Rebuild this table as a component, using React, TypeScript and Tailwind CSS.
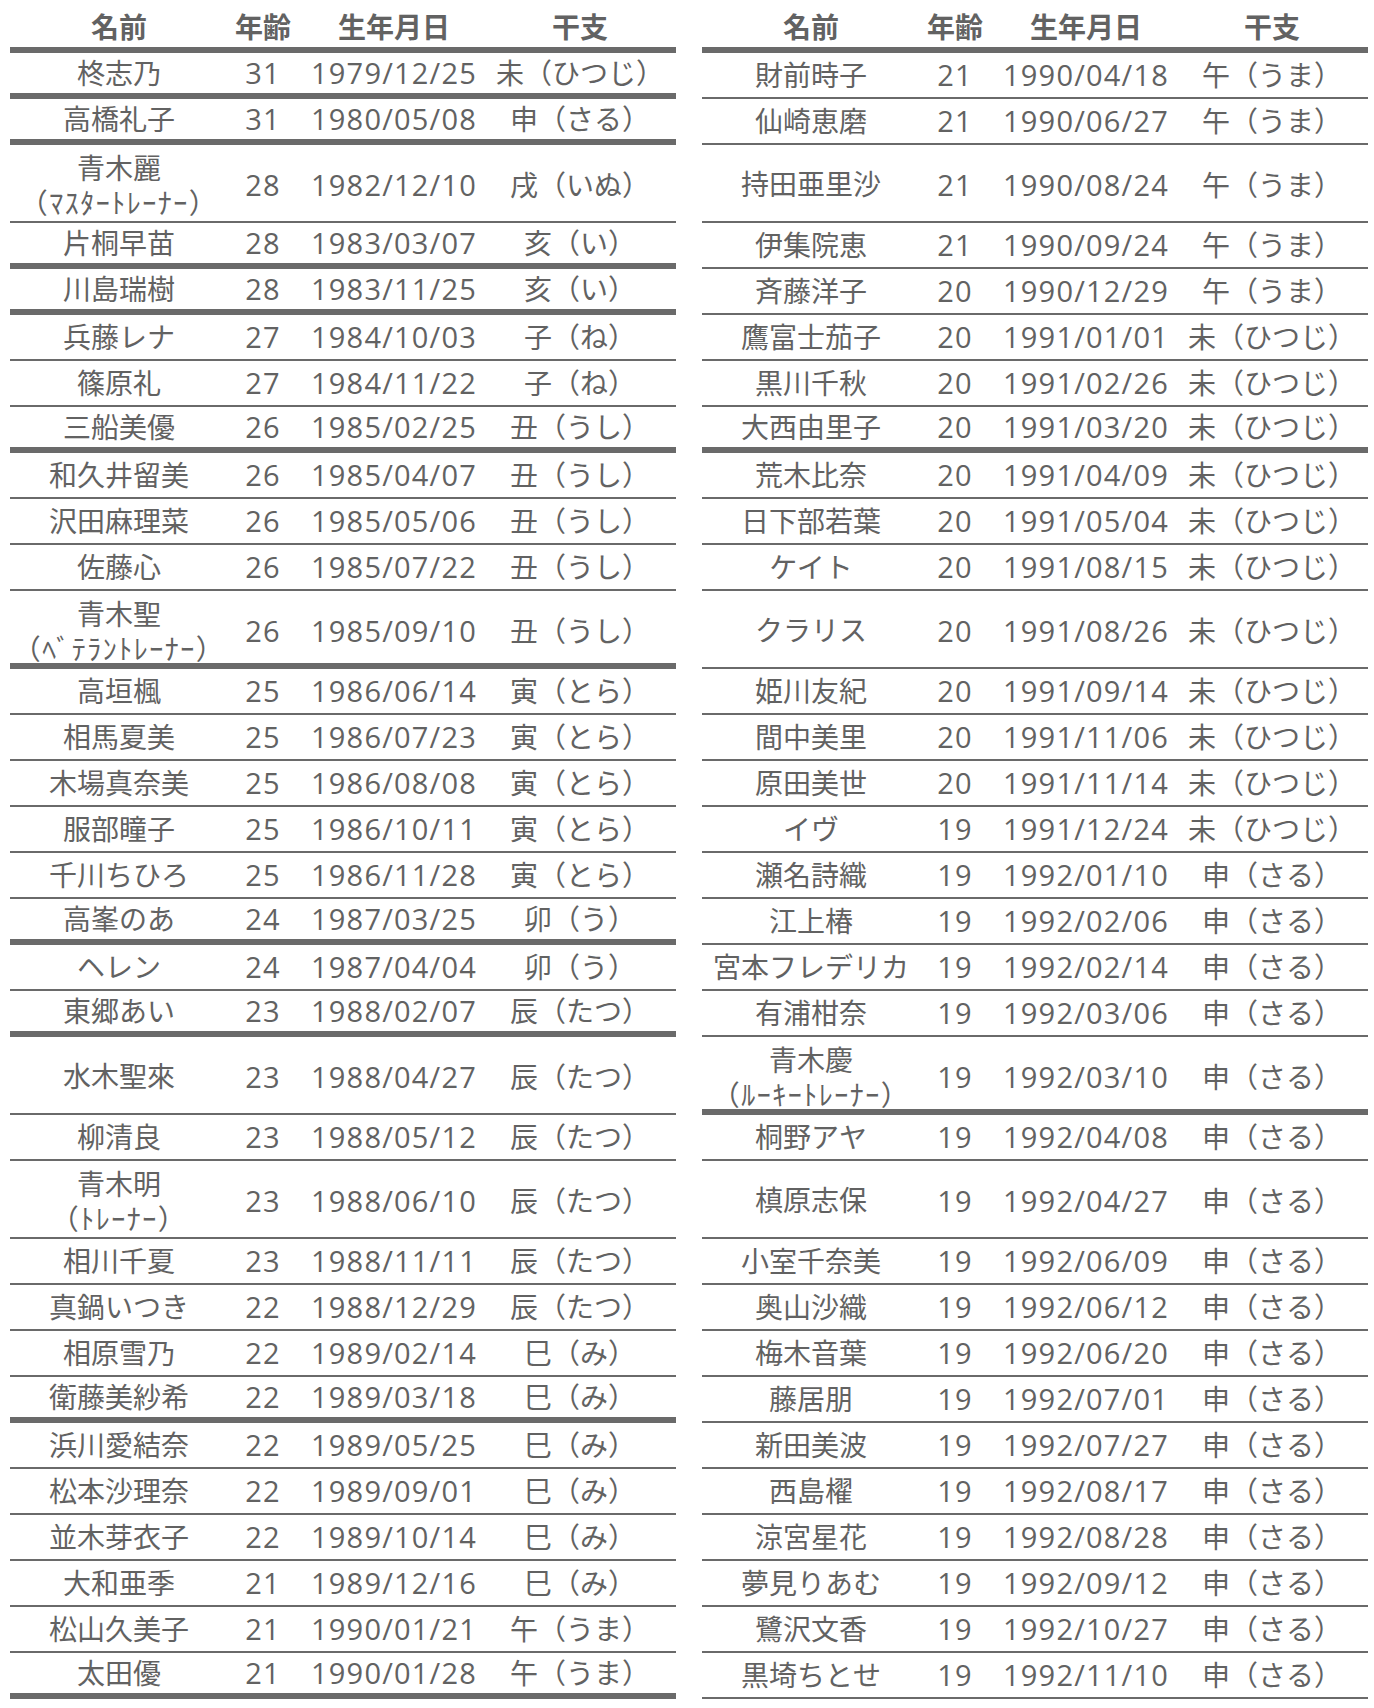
import React from "react";

type Row = {
  n: string;
  sub?: string;
  a: string;
  d: string;
  z: string;
  tall?: boolean;
  thick?: boolean;
};

const left: Row[] = [
  { n: "柊志乃", a: "31", d: "1979/12/25", z: "未（ひつじ）", thick: true },
  { n: "高橋礼子", a: "31", d: "1980/05/08", z: "申（さる）", thick: true },
  { n: "青木麗", sub: "（ﾏｽﾀｰﾄﾚｰﾅｰ）", a: "28", d: "1982/12/10", z: "戌（いぬ）", tall: true },
  { n: "片桐早苗", a: "28", d: "1983/03/07", z: "亥（い）", thick: true },
  { n: "川島瑞樹", a: "28", d: "1983/11/25", z: "亥（い）", thick: true },
  { n: "兵藤レナ", a: "27", d: "1984/10/03", z: "子（ね）" },
  { n: "篠原礼", a: "27", d: "1984/11/22", z: "子（ね）" },
  { n: "三船美優", a: "26", d: "1985/02/25", z: "丑（うし）", thick: true },
  { n: "和久井留美", a: "26", d: "1985/04/07", z: "丑（うし）" },
  { n: "沢田麻理菜", a: "26", d: "1985/05/06", z: "丑（うし）" },
  { n: "佐藤心", a: "26", d: "1985/07/22", z: "丑（うし）" },
  { n: "青木聖", sub: "（ﾍﾞﾃﾗﾝﾄﾚｰﾅｰ）", a: "26", d: "1985/09/10", z: "丑（うし）", tall: true, thick: true },
  { n: "高垣楓", a: "25", d: "1986/06/14", z: "寅（とら）" },
  { n: "相馬夏美", a: "25", d: "1986/07/23", z: "寅（とら）" },
  { n: "木場真奈美", a: "25", d: "1986/08/08", z: "寅（とら）" },
  { n: "服部瞳子", a: "25", d: "1986/10/11", z: "寅（とら）" },
  { n: "千川ちひろ", a: "25", d: "1986/11/28", z: "寅（とら）" },
  { n: "高峯のあ", a: "24", d: "1987/03/25", z: "卯（う）", thick: true },
  { n: "ヘレン", a: "24", d: "1987/04/04", z: "卯（う）" },
  { n: "東郷あい", a: "23", d: "1988/02/07", z: "辰（たつ）", thick: true },
  { n: "水木聖來", a: "23", d: "1988/04/27", z: "辰（たつ）", tall: true },
  { n: "柳清良", a: "23", d: "1988/05/12", z: "辰（たつ）" },
  { n: "青木明", sub: "（ﾄﾚｰﾅｰ）", a: "23", d: "1988/06/10", z: "辰（たつ）", tall: true },
  { n: "相川千夏", a: "23", d: "1988/11/11", z: "辰（たつ）" },
  { n: "真鍋いつき", a: "22", d: "1988/12/29", z: "辰（たつ）" },
  { n: "相原雪乃", a: "22", d: "1989/02/14", z: "巳（み）" },
  { n: "衛藤美紗希", a: "22", d: "1989/03/18", z: "巳（み）", thick: true },
  { n: "浜川愛結奈", a: "22", d: "1989/05/25", z: "巳（み）" },
  { n: "松本沙理奈", a: "22", d: "1989/09/01", z: "巳（み）" },
  { n: "並木芽衣子", a: "22", d: "1989/10/14", z: "巳（み）" },
  { n: "大和亜季", a: "21", d: "1989/12/16", z: "巳（み）" },
  { n: "松山久美子", a: "21", d: "1990/01/21", z: "午（うま）" },
  { n: "太田優", a: "21", d: "1990/01/28", z: "午（うま）", thick: true },
];

const right: Row[] = [
  { n: "財前時子", a: "21", d: "1990/04/18", z: "午（うま）" },
  { n: "仙崎恵磨", a: "21", d: "1990/06/27", z: "午（うま）" },
  { n: "持田亜里沙", a: "21", d: "1990/08/24", z: "午（うま）", tall: true },
  { n: "伊集院恵", a: "21", d: "1990/09/24", z: "午（うま）" },
  { n: "斉藤洋子", a: "20", d: "1990/12/29", z: "午（うま）" },
  { n: "鷹富士茄子", a: "20", d: "1991/01/01", z: "未（ひつじ）" },
  { n: "黒川千秋", a: "20", d: "1991/02/26", z: "未（ひつじ）" },
  { n: "大西由里子", a: "20", d: "1991/03/20", z: "未（ひつじ）", thick: true },
  { n: "荒木比奈", a: "20", d: "1991/04/09", z: "未（ひつじ）" },
  { n: "日下部若葉", a: "20", d: "1991/05/04", z: "未（ひつじ）" },
  { n: "ケイト", a: "20", d: "1991/08/15", z: "未（ひつじ）" },
  { n: "クラリス", a: "20", d: "1991/08/26", z: "未（ひつじ）", tall: true },
  { n: "姫川友紀", a: "20", d: "1991/09/14", z: "未（ひつじ）" },
  { n: "間中美里", a: "20", d: "1991/11/06", z: "未（ひつじ）" },
  { n: "原田美世", a: "20", d: "1991/11/14", z: "未（ひつじ）" },
  { n: "イヴ", a: "19", d: "1991/12/24", z: "未（ひつじ）" },
  { n: "瀬名詩織", a: "19", d: "1992/01/10", z: "申（さる）" },
  { n: "江上椿", a: "19", d: "1992/02/06", z: "申（さる）" },
  { n: "宮本フレデリカ", a: "19", d: "1992/02/14", z: "申（さる）" },
  { n: "有浦柑奈", a: "19", d: "1992/03/06", z: "申（さる）" },
  { n: "青木慶", sub: "（ﾙｰｷｰﾄﾚｰﾅｰ）", a: "19", d: "1992/03/10", z: "申（さる）", tall: true, thick: true },
  { n: "桐野アヤ", a: "19", d: "1992/04/08", z: "申（さる）" },
  { n: "槙原志保", a: "19", d: "1992/04/27", z: "申（さる）", tall: true },
  { n: "小室千奈美", a: "19", d: "1992/06/09", z: "申（さる）" },
  { n: "奥山沙織", a: "19", d: "1992/06/12", z: "申（さる）" },
  { n: "梅木音葉", a: "19", d: "1992/06/20", z: "申（さる）" },
  { n: "藤居朋", a: "19", d: "1992/07/01", z: "申（さる）" },
  { n: "新田美波", a: "19", d: "1992/07/27", z: "申（さる）" },
  { n: "西島櫂", a: "19", d: "1992/08/17", z: "申（さる）" },
  { n: "涼宮星花", a: "19", d: "1992/08/28", z: "申（さる）" },
  { n: "夢見りあむ", a: "19", d: "1992/09/12", z: "申（さる）" },
  { n: "鷺沢文香", a: "19", d: "1992/10/27", z: "申（さる）" },
  { n: "黒埼ちとせ", a: "19", d: "1992/11/10", z: "申（さる）" },
];

function TableRow({ r }: { r: Row }) {
  const h = r.tall ? "h-[78px] pt-[3px]" : "h-[46px]";
  const b = r.thick ? "border-b-[6px]" : "border-b-2";
  return (
    <div className={`grid grid-cols-[218px_70px_192px_180px] items-center ${h} ${b} border-[#6a6a6a]`}>
      <div className={`flex flex-col items-center leading-[35px] ${r.sub ? "pt-[3px]" : ""}`}>
        <span>{r.n}</span>
        {r.sub ? <span className="tracking-[1.5px]">{r.sub}</span> : null}
      </div>
      <div className="text-center text-[29px] tracking-[1.2px]">{r.a}</div>
      <div className="text-center text-[29px] tracking-[1.2px]">{r.d}</div>
      <div className="text-center">{r.z}</div>
    </div>
  );
}

function Table({ rows }: { rows: Row[] }) {
  return (
    <div className="w-[666px] flex flex-col">
      <div className="grid grid-cols-[218px_70px_192px_180px] items-center h-[53px] pt-[7px] border-b-[6px] border-[#6a6a6a] font-bold">
        <div className="text-center">名前</div>
        <div className="text-center">年齢</div>
        <div className="text-center">生年月日</div>
        <div className="text-center">干支</div>
      </div>
      {rows.map((r, i) => (
        <TableRow key={i} r={r} />
      ))}
    </div>
  );
}

export default function App() {
  return (
    <div className="w-[1374px] h-[1708px] bg-white text-[#626262] text-[28px] leading-[36px] font-['Open_Sans','Noto_Sans_CJK_JP',sans-serif]">
      <div className="flex gap-[26px] pl-[10px]">
        <Table rows={left} />
        <Table rows={right} />
      </div>
    </div>
  );
}
